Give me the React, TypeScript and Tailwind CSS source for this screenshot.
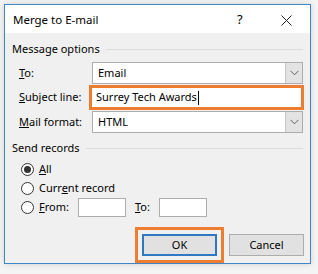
import React from "react";

const font = { fontFamily: '"Segoe UI", "Noto Sans", sans-serif' };

function Chevron() {
  return (
    <svg width="9" height="6" viewBox="0 0 9 6" fill="none">
      <path d="M0.5 0.8 L4.5 4.8 L8.5 0.8" stroke="#606060" strokeWidth="1" />
    </svg>
  );
}

function Combo({ value }: { value: string }) {
  return (
    <div className="flex h-[22px] w-[211px] border border-[#adadad] bg-white">
      <div className="flex flex-1 items-center pl-[5px] text-[11px] text-black">{value}</div>
      <div className="flex w-[17px] items-center justify-center border-l border-[#c8c8c8] bg-[#e3e3e3]">
        <Chevron />
      </div>
    </div>
  );
}

function Group({ title }: { title: string }) {
  return (
    <div className="flex items-center gap-[6px] pl-[7px] pr-[7px]">
      <span className="text-[11px] leading-[16px] text-black">{title}</span>
      <div className="h-px flex-1 bg-[#dcdcdc]" />
    </div>
  );
}

function Radio({ checked }: { checked?: boolean }) {
  return (
    <div className="flex h-[13px] w-[13px] items-center justify-center rounded-full border border-[#333333] bg-white">
      {checked && <div className="h-[7px] w-[7px] rounded-full bg-[#333333]" />}
    </div>
  );
}

export default function App() {
  return (
    <div className="h-[274px] w-[318px] bg-[#f4f4f4] pl-[4px] pt-[4px]" style={font}>
      <div className="flex h-[260px] w-[307px] flex-col border border-[#3f86c8] bg-[#f0f0f0] shadow-[0_0_6px_rgba(0,0,0,0.15)]">
        <div className="flex h-[30px] items-center bg-white pl-[8px] pt-[2px] text-[11.5px] text-black">
          <span className="flex-1">Merge to E-mail</span>
          <span className="w-[44px] text-[13px]">?</span>
          <svg width="11" height="11" viewBox="0 0 11 11" className="mr-[18px]">
            <path d="M0.5 0.5 L10.5 10.5 M10.5 0.5 L0.5 10.5" stroke="#222" strokeWidth="1" />
          </svg>
        </div>

        <div className="flex flex-1 flex-col pt-[8px]">
          <Group title="Message options" />

          <div className="mt-[5px] flex items-center pl-[14px] text-[11px]">
            <span className="w-[73px]"><u>T</u>o:</span>
            <Combo value="Email" />
          </div>

          <div className="mt-[1px] flex items-center pl-[14px] text-[11px]">
            <span className="w-[70px]"><u>S</u>ubject line:</span>
            <div className="flex h-[25px] w-[215px] items-center border-[3px] border-[#ed7d31] bg-white pl-[4px]">
              Surrey Tech Awards<span className="ml-px inline-block h-[14px] w-px bg-black" />
            </div>
          </div>

          <div className="mt-[1px] flex items-center pl-[14px] text-[11px]">
            <span className="w-[73px]"><u>M</u>ail format:</span>
            <Combo value="HTML" />
          </div>

          <div className="mt-[7px]">
            <Group title="Send records" />
          </div>

          <div className="mt-[5px] flex flex-col gap-[3px] pl-[16px] text-[11px]">
            <div className="flex h-[16px] items-center gap-[5px]">
              <Radio checked />
              <span><u>A</u>ll</span>
            </div>
            <div className="flex h-[16px] items-center gap-[5px]">
              <Radio />
              <span>Curr<u>e</u>nt record</span>
            </div>
            <div className="flex h-[16px] items-center">
              <Radio />
              <span className="ml-[5px] w-[39px]"><u>F</u>rom:</span>
              <div className="h-[19px] w-[48px] border border-[#adadad] bg-white" />
              <span className="ml-[9px] w-[24px]"><u>T</u>o:</span>
              <div className="h-[19px] w-[48px] border border-[#adadad] bg-white" />
            </div>
          </div>

          <div className="mt-[12px] flex items-center justify-end gap-[5px] pr-[6px]">
            <div className="border-[3px] border-[#ed7d31] p-[4px]">
              <div className="flex h-[22px] w-[75px] items-center justify-center border-2 border-[#2f78c4] bg-[#e1e1e1] text-[11px]">
                OK
              </div>
            </div>
            <div className="flex h-[22px] w-[75px] items-center justify-center border border-[#adadad] bg-[#e1e1e1] text-[11px]">
              Cancel
            </div>
          </div>
        </div>
      </div>
    </div>
  );
}
